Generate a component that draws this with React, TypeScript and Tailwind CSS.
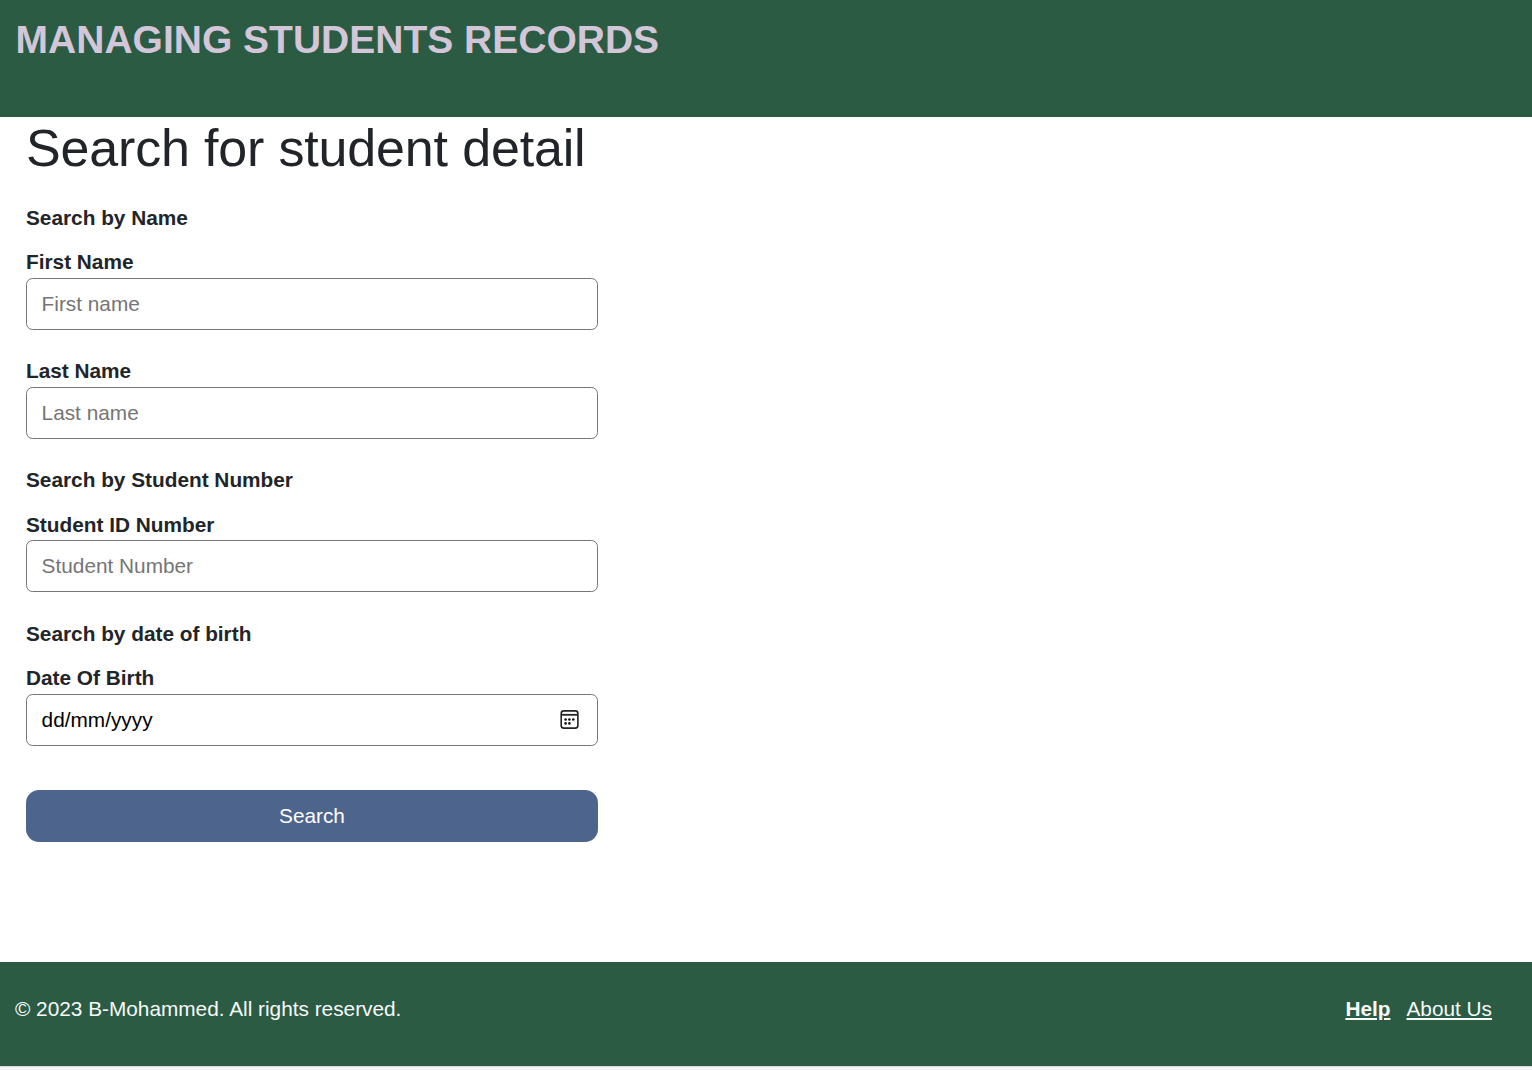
import React from "react";

function Heading({ className, children }: { className: string; children: React.ReactNode }) {
  return <p className={`leading-[31px] font-bold ${className}`}>{children}</p>;
}

const box =
  "block h-[52px] w-full rounded-[6.5px] border border-[#767676] bg-white px-[14.6px] text-black placeholder:text-[#757575]";

type FieldProps = { id: string; label: string; placeholder: string; labelGap: string };

function Field({ id, label, placeholder, labelGap }: FieldProps) {
  return (
    <div>
      <label htmlFor={id} className={`block leading-[31px] font-bold ${labelGap}`}>
        {label}
      </label>
      <input id={id} type="text" placeholder={placeholder} className={box} />
    </div>
  );
}

function CalendarIcon() {
  return (
    <svg width="20" height="20" viewBox="0 0 20 20" fill="none" aria-hidden="true">
      <rect x="1.2" y="0.9" width="16.7" height="17.2" rx="2.6" stroke="#222" strokeWidth="1.6" />
      <path d="M1.5 4.8H17.6" stroke="#222" strokeWidth="1.8" />
      <g fill="#111">
        <circle cx="5.6" cy="9.5" r="1.3" />
        <circle cx="9.4" cy="9.5" r="1.3" />
        <circle cx="13.3" cy="9.5" r="1.3" />
        <circle cx="5.6" cy="13.4" r="1.3" />
        <circle cx="9.4" cy="13.4" r="1.3" />
      </g>
    </svg>
  );
}

export default function App() {
  return (
    <div className="flex min-h-screen flex-col bg-white font-['Liberation_Sans',Arial,sans-serif] text-[20.8px] text-[#212529]">
      <header className="h-[117px] bg-[#2b5c43] px-[15.6px] pt-[14px]">
        <div className="text-[39px] leading-[52px] font-bold whitespace-nowrap text-[#d3c6d8]">
          MANAGING STUDENTS RECORDS
        </div>
      </header>
      <main className="h-[845px] px-[26px]">
        <h1 className="h-[85px] text-[52px] leading-[62.4px] tracking-[-0.17px] whitespace-nowrap">
          Search for student detail
        </h1>
        <form className="w-[572px]">
          <Heading className="mb-[13px]">Search by Name</Heading>
          <Field id="first" label="First Name" placeholder="First name" labelGap="pb-px" />
          <div className="mt-[25px]">
            <Field id="last" label="Last Name" placeholder="Last name" labelGap="pb-px" />
          </div>
          <Heading className="mt-[25px] mb-3.5">Search by Student Number</Heading>
          <Field id="number" label="Student ID Number" placeholder="Student Number" labelGap="pb-0" />
          <Heading className="mt-[26px] mb-[13px]">Search by date of birth</Heading>
          <div className="pb-px leading-[31px] font-bold">Date Of Birth</div>
          <div className="flex h-[52px] items-center justify-between rounded-[6.5px] border border-[#767676] pr-[17px] pl-[14.6px] text-black">
            <span>dd/mm/yyyy</span>
            <CalendarIcon />
          </div>
          <button type="button" className="mt-11 block h-[52px] w-full rounded-[13px] bg-[#4d648d] text-white">
            Search
          </button>
        </form>
      </main>
      <footer className="flex h-[104px] items-start justify-between bg-[#2b5c43] pt-[31px] pr-[40px] pl-[15px] leading-[31.2px] text-[#f8f9fa]">
        <p>© 2023 B-Mohammed. All rights reserved.</p>
        <nav className="flex gap-4">
          <a className="font-bold underline">Help</a>
          <a className="underline">About Us</a>
        </nav>
      </footer>
      <div className="h-1 border-t border-[#d8d8d8] bg-[#f4f4f4]" />
    </div>
  );
}
